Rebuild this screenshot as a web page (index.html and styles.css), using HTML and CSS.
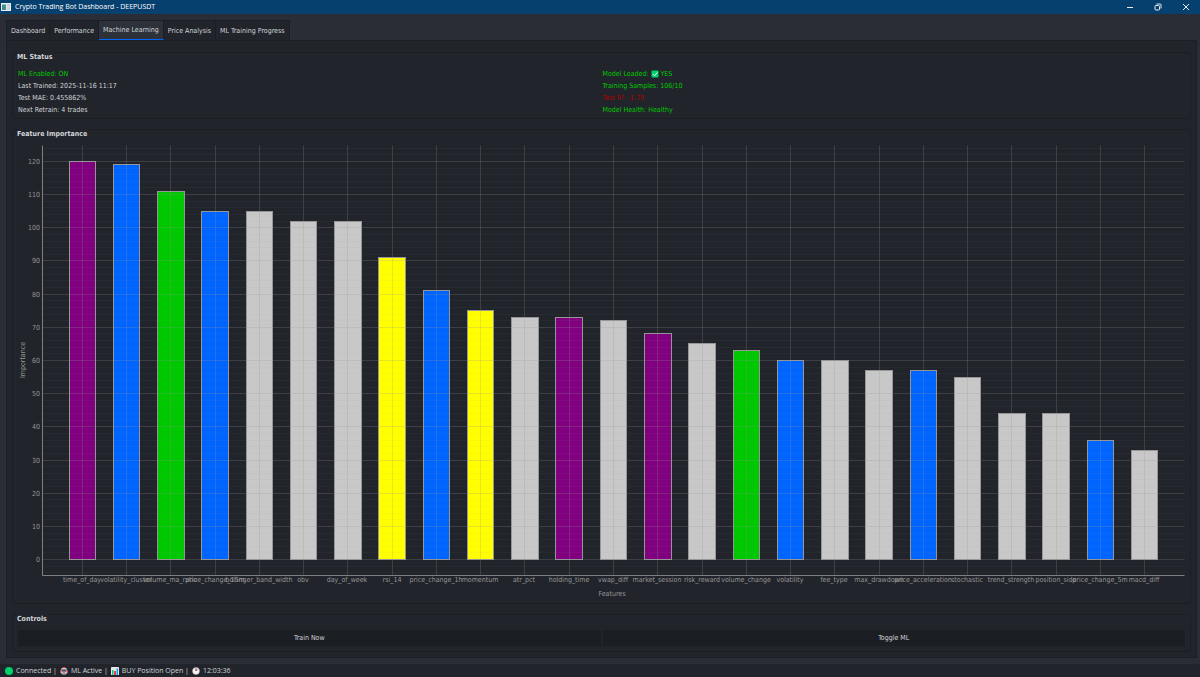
FILE: index.html
```html
<!DOCTYPE html>
<html lang="en">
<head>
    <meta charset="UTF-8">
    <meta name="viewport" content="width=device-width, initial-scale=1.0">
    <title>Crypto Trading Bot Dashboard - DEEPUSDT</title>
    <link rel="stylesheet" href="styles.css">
</head>
<body>
    <header class="titlebar">
        <svg class="app-icon" viewBox="0 0 20 16">
            <rect width="20" height="16" fill="#e8eef2"/>
            <rect x="2" y="3" width="8" height="11" fill="#3f8f86"/>
            <rect x="12" y="3" width="6" height="2" fill="#9aa7b0"/>
            <rect x="12" y="7" width="6" height="7" fill="#c9d2d8"/>
        </svg>
        <h1>Crypto Trading Bot Dashboard - DEEPUSDT</h1>
        <div class="window-buttons">
            <button type="button" aria-label="Minimize">
                <svg viewBox="0 0 8 8"><path d="M1 4.500h6"/></svg>
            </button>
            <button type="button" aria-label="Restore">
                <svg viewBox="0 0 8 8"><rect x="1" y="2.5" width="4.5" height="4.5" rx="1"/><path d="M2.5 1H6a1 1 0 0 1 1 1v3.500"/></svg>
            </button>
            <button type="button" aria-label="Close">
                <svg viewBox="0 0 8 8"><path d="M1 1l6 6M7 1L1 7"/></svg>
            </button>
        </div>
    </header>

    <main class="content">
        <nav class="tabs" role="tablist">
            <button type="button" class="tab" role="tab">Dashboard</button>
            <button type="button" class="tab" role="tab">Performance</button>
            <button type="button" class="tab active" role="tab" aria-selected="true">Machine Learning</button>
            <button type="button" class="tab" role="tab">Price Analysis</button>
            <button type="button" class="tab" role="tab">ML Training Progress</button>
        </nav>

        <div class="panel">
            <section class="group status">
                <h2>ML Status</h2>
                <div class="status-grid">
                    <p class="good">ML Enabled: ON</p>
                    <p class="good">Model Loaded:
                        <svg class="emoji" viewBox="0 0 16 16"><rect x="1" y="1" width="14" height="14" rx="2" fill="#00d26a"/><path d="M4 8.500l3 3 5.500-6.500" fill="none" stroke="#fff" stroke-width="2"/></svg>
                        YES</p>
                    <p>Last Trained: 2025-11-16 11:17</p>
                    <p class="good">Training Samples: 106/10</p>
                    <p>Test MAE: 0.455862%</p>
                    <p class="bad">Test R²: -1.79</p>
                    <p>Next Retrain: 4 trades</p>
                    <p class="good">Model Health: Healthy</p>
                </div>
            </section>

            <section class="group grow">
                <h2>Feature Importance</h2>
                <div class="chart" id="chart"></div>
            </section>

            <section class="group">
                <h2>Controls</h2>
                <div class="controls">
                    <button type="button" class="btn">Train Now</button>
                    <button type="button" class="btn">Toggle ML</button>
                </div>
            </section>
        </div>
    </main>

    <footer class="statusbar">
        <svg class="emoji" viewBox="0 0 16 16"><circle cx="8" cy="8" r="8" fill="#00d26a"/></svg>
        <span>Connected |</span>
        <svg class="emoji" viewBox="0 0 16 16">
            <rect x="0" y="6" width="2" height="6" fill="#f8312f"/>
            <rect x="14" y="6" width="2" height="6" fill="#f8312f"/>
            <rect x="5" y="0" width="6" height="3" fill="#f8312f"/>
            <rect x="2" y="2" width="12" height="12" rx="3" fill="#d3d3d3"/>
            <rect x="3" y="5" width="10" height="4" rx="1" fill="#321b41"/>
            <circle cx="6" cy="7" r="1" fill="#26eafc"/>
            <circle cx="10" cy="7" r="1" fill="#26eafc"/>
            <rect x="5" y="11" width="6" height="2" fill="#636363"/>
            <path d="M3 16c0-2 10-2 10 0z" fill="#9b9b9b"/>
        </svg>
        <span>ML Active |</span>
        <svg class="emoji" viewBox="0 0 16 16">
            <rect width="16" height="16" rx="1" fill="#e6e6e6"/>
            <rect x="2" y="6" width="3" height="10" fill="#00d26a"/>
            <rect x="6" y="8" width="4" height="8" fill="#f92f60"/>
            <rect x="11" y="3" width="3" height="13" fill="#00a6ed"/>
        </svg>
        <span>BUY Position Open |</span>
        <svg class="emoji" viewBox="0 0 16 16">
            <circle cx="8" cy="8" r="7" fill="#f4f4f4" stroke="#b0a8b4" stroke-width="1"/>
            <path d="M8 8V3" stroke="#402a32" stroke-width="2"/>
            <path d="M8 8l3-3" stroke="#f8312f" stroke-width="2"/>
        </svg>
        <span>12:03:36</span>
    </footer>

    <script src="chart.js"></script>
</body>
</html>
```
FILE: styles.css
```css
:root {
    --window: #2a2d36;
    --surface: #21242b;
    --dark: #1b1e23;
    --text: #d2d4d8;
    --accent: #0066ff;
    --ui-font: Tahoma, "DejaVu Sans Condensed", "DejaVu Sans", sans-serif;
    --system-font: "Open Sans", sans-serif;
}

* {
    margin: 0;
    padding: 0;
    box-sizing: border-box;
}

body {
    display: flex;
    flex-direction: column;
    min-height: 100vh;
    background-color: var(--window);
    color: var(--text);
    font-family: var(--ui-font);
    font-size: 7px;
    line-height: 12px;
}

button {
    font: inherit;
    color: inherit;
    border: none;
    background: none;
}

.titlebar {
    display: flex;
    align-items: center;
    height: 14px;
    padding-left: 1px;
    background-color: #06406f;
    color: #fff;
}

.titlebar h1 {
    margin-left: 4px;
    font-family: var(--system-font);
    font-size: 7px;
    font-weight: 400;
}

.app-icon {
    width: 10px;
    height: 8px;
}

.window-buttons {
    display: flex;
    margin-left: auto;
}

.window-buttons button {
    display: flex;
    align-items: center;
    justify-content: center;
    width: 28px;
    height: 14px;
}

.window-buttons svg {
    width: 8px;
    height: 8px;
    fill: none;
    stroke: #e6edf3;
}

.content {
    display: flex;
    flex-direction: column;
    flex: 1;
    padding: 6px 3px 6px 6px;
}

/* Tabs */
.tabs {
    display: flex;
    height: 20px;
}

.tab {
    padding: 0 4px;
    background-color: var(--surface);
    border: 1px solid var(--dark);
    border-left-width: 0;
    border-bottom: none;
}

.tab:first-child {
    border-left-width: 1px;
}

.tab.active {
    background-color: #2c313a;
    border-bottom: 1px solid var(--accent);
}

.panel {
    display: flex;
    flex-direction: column;
    flex: 1;
    gap: 10px;
    padding: 11px 5px 5px;
    background-color: var(--surface);
    border: 1px solid var(--dark);
}

.group {
    padding: 0 5px 5px;
    border: 1px solid var(--dark);
    border-radius: 3px;
}

.group.status {
    padding-bottom: 2px;
}

.group h2 {
    width: fit-content;
    margin: -1px 0 0 -1px;
    padding-right: 2px;
    background-color: var(--surface);
    font-family: Tahoma, "DejaVu Sans Condensed", "DejaVu Sans", sans-serif;
    font-size: 7px;
    font-weight: 700;
    line-height: 10px;
}

.grow {
    display: flex;
    flex-direction: column;
    flex: 1;
}

.status-grid {
    display: grid;
    grid-template-columns: 1fr 1fr;
    column-gap: 2px;
    margin-top: 6px;
}

.good {
    color: #00c800;
}

.bad {
    color: #b40000;
}

.emoji {
    width: 8px;
    height: 8px;
    flex: none;
    vertical-align: -2px;
}

/* Chart */
.chart {
    flex: 1;
    min-height: 200px;
    overflow: hidden;
}

.chart svg {
    display: block;
}

.chart text {
    fill: #969696;
    font-size: 7px;
    text-anchor: middle;
}

.chart .tick {
    text-anchor: end;
}

.chart .axis {
    stroke: #7d7f82;
}

.chart .major {
    stroke: rgba(150, 150, 150, 0.24);
}

.chart .minor {
    stroke: rgba(150, 150, 150, 0.06);
}

.chart .bar {
    stroke: #969696;
}

/* Controls */
.controls {
    display: flex;
    gap: 2px;
    margin-top: 6px;
}

.btn {
    flex: 1;
    height: 16px;
    background-color: var(--dark);
}

.statusbar {
    display: flex;
    align-items: center;
    gap: 3px;
    height: 13px;
    padding-left: 5px;
    background-color: var(--surface);
    font-family: var(--system-font);
}
```
FILE: chart.js
```js
const PURPLE = '#800080';
const BLUE = '#0064ff';
const GREEN = '#00c800';
const YELLOW = '#ffff00';
const GREY = '#c8c8c8';

const features = [
    ['time_of_day', 120, PURPLE],
    ['volatility_cluster', 119, BLUE],
    ['volume_ma_ratio', 111, GREEN],
    ['price_change_15m', 105, BLUE],
    ['bollinger_band_width', 105, GREY],
    ['obv', 102, GREY],
    ['day_of_week', 102, GREY],
    ['rsi_14', 91, YELLOW],
    ['price_change_1h', 81, BLUE],
    ['momentum', 75, YELLOW],
    ['atr_pct', 73, GREY],
    ['holding_time', 73, PURPLE],
    ['vwap_diff', 72, GREY],
    ['market_session', 68, PURPLE],
    ['risk_reward', 65, GREY],
    ['volume_change', 63, GREEN],
    ['volatility', 60, BLUE],
    ['fee_type', 60, GREY],
    ['max_drawdown', 57, GREY],
    ['price_acceleration', 57, BLUE],
    ['stochastic', 55, GREY],
    ['trend_strength', 44, GREY],
    ['position_side', 44, GREY],
    ['price_change_5m', 36, BLUE],
    ['macd_diff', 33, GREY]
];

const X_MIN = -0.9;
const X_MAX = 24.9;
const Y_MIN = -4.8;
const Y_MAX = 124.8;

function draw() {
    const box = document.getElementById('chart');
    box.innerHTML = '';
    const w = box.clientWidth;
    const h = box.clientHeight;
    const left = 24, right = w - 1, top = 6, bottom = h - 23;
    const px = v => Math.round(left + (v - X_MIN) / (X_MAX - X_MIN) * (right - left));
    const py = v => Math.round(bottom - (v - Y_MIN) / (Y_MAX - Y_MIN) * (bottom - top));
    const line = (x1, y1, x2, y2, cls) =>
        `<path class="${cls}" d="M${x1 + 0.5} ${y1 + 0.5}L${x2 + 0.5} ${y2 + 0.5}"/>`;

    let out = '';

    features.forEach(([name, value, color], i) => {
        const x = px(i - 0.3);
        const y = py(value);
        out += `<rect class="bar" x="${x + 0.5}" y="${y + 0.5}" width="${px(i + 0.3) - x}" height="${py(0) - y}" fill="${color}"/>`;
    });

    // grid is painted over the bars
    for (let v = -4; v <= 124; v += 2) {
        out += line(left, py(v), right, py(v), v % 10 === 0 ? 'major' : 'minor');
    }
    features.forEach((f, i) => {
        out += line(px(i), top, px(i), bottom, 'major');
    });

    out += line(left, top, left, bottom, 'axis');
    out += line(left, bottom, right, bottom, 'axis');

    for (let v = 0; v <= 120; v += 10) {
        out += `<text class="tick" x="${left - 2}" y="${py(v) + 3}">${v}</text>`;
    }
    features.forEach(([name], i) => {
        out += `<text x="${px(i)}" y="${bottom + 7}">${name}</text>`;
    });

    const midX = Math.round((left + right) / 2);
    const midY = Math.round((top + bottom) / 2);
    out += `<text x="${midX - 1}" y="${bottom + 21}">Features</text>`;
    out += `<text transform="translate(7 ${midY}) rotate(-90)">Importance</text>`;

    box.innerHTML = `<svg width="${w}" height="${h}">${out}</svg>`;
}

draw();
window.addEventListener('resize', draw);
```
